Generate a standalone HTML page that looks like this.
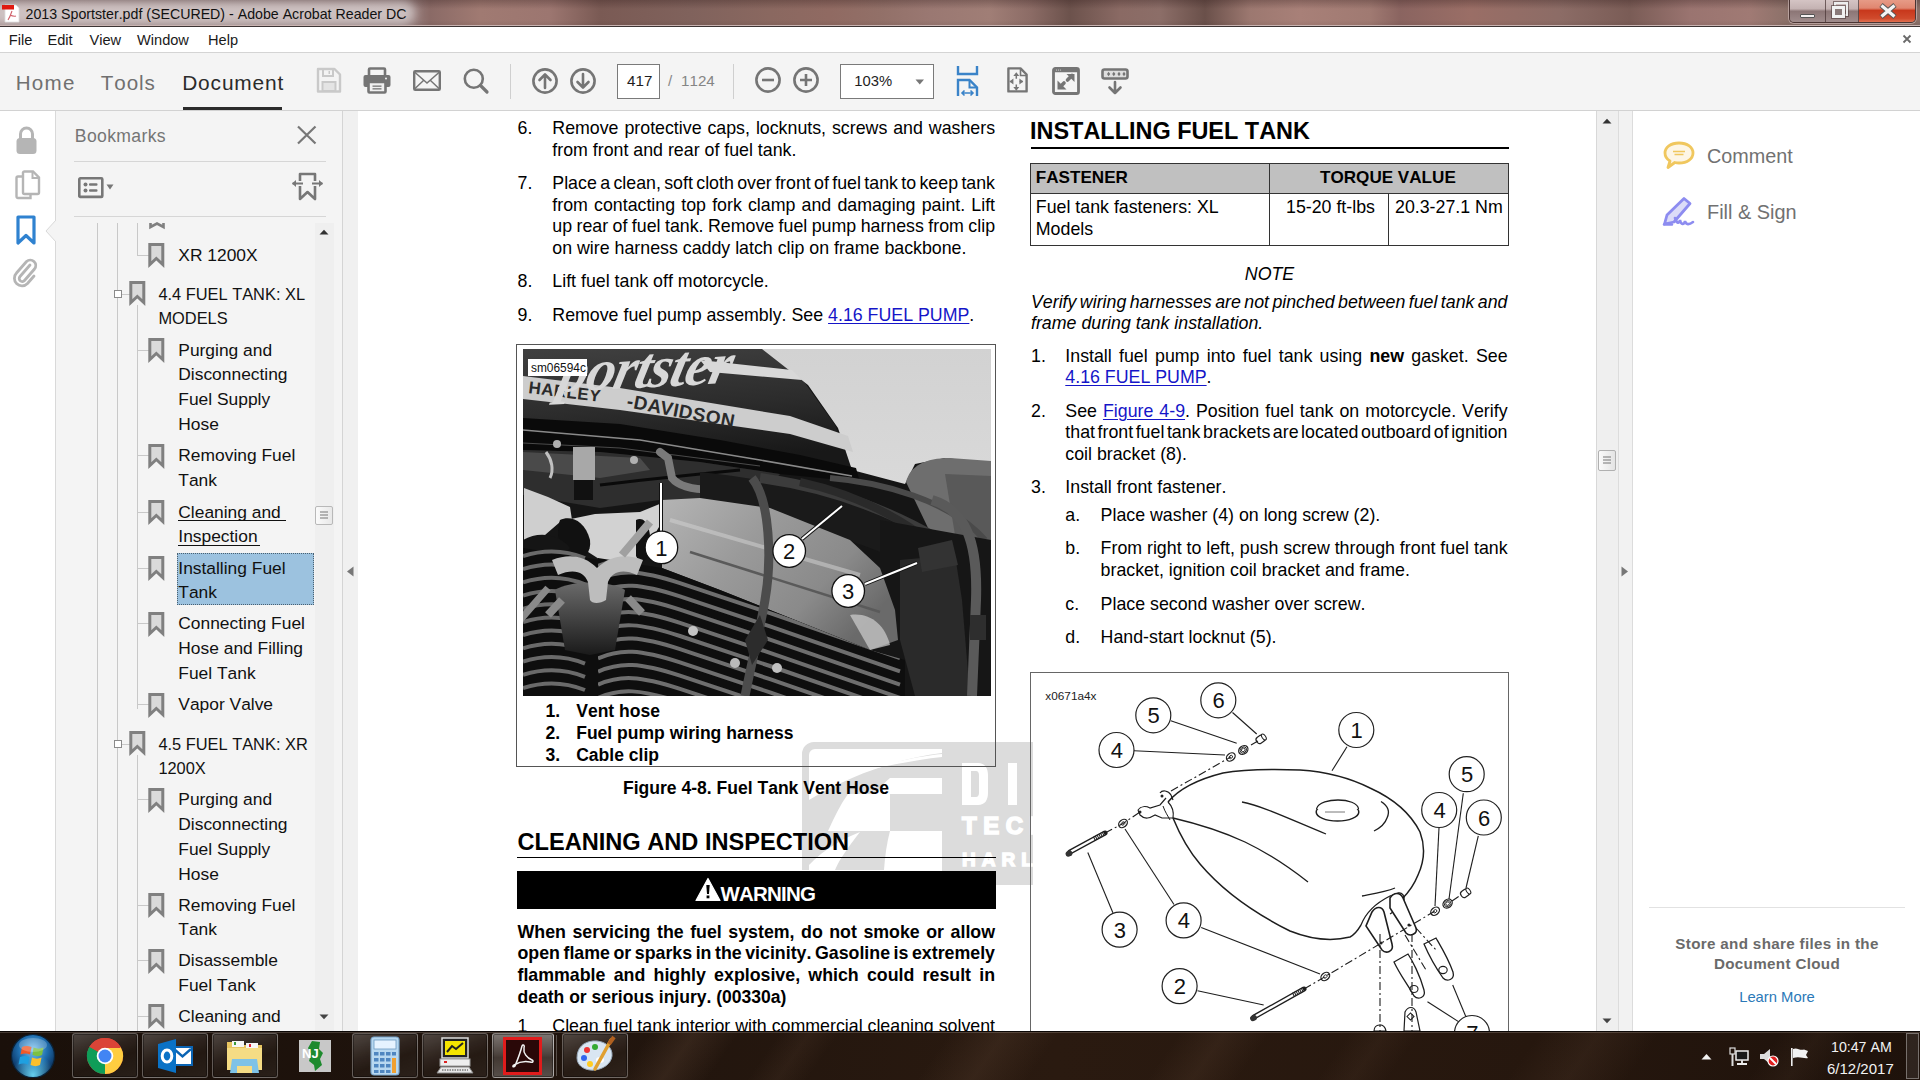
<!DOCTYPE html>
<html><head><meta charset="utf-8"><style>
html,body{margin:0;padding:0;}
body{width:1920px;height:1080px;overflow:hidden;position:relative;background:#fff;font-family:"Liberation Sans",sans-serif;color:#000;}
.t{position:absolute;white-space:nowrap;font-kerning:none;}
.r{position:absolute;}
svg{position:absolute;overflow:visible;}
</style></head><body>
<div class="r" style="left:0;top:0;width:1920px;height:27px;background:linear-gradient(90deg,#a89494 0px,#a08c8c 400px,#8a6a66 430px,#a07a72 480px,#9c7670 550px,#7a5a54 600px,#80625c 690px,#8a6860 770px,#906a62 830px,#927068 880px,#9a7872 930px,#a07e76 990px,#8c6c66 1030px,#6c524c 1070px,#8a6a64 1120px,#8c6e68 1160px,#6a504a 1205px,#9c7870 1250px,#a88078 1300px,#a07a72 1370px,#8a6460 1400px,#9a6e66 1470px,#8c6c66 1560px,#7a5c56 1630px,#9a7470 1690px,#a07a74 1750px,#8a7068 1790px,#8a7068 1920px);"></div>
<div class="r" style="left:0;top:0;width:1920px;height:27px;background:linear-gradient(180deg,rgba(40,20,20,.28) 0px,rgba(40,20,20,0) 9px,rgba(0,0,0,0) 20px,rgba(0,0,0,.05) 24px);"></div>
<div class="r" style="left:-10px;top:2px;width:425px;height:22px;background:rgba(215,205,205,.8);filter:blur(5px);border-radius:10px;"></div>
<div class="r" style="left:0px;top:25px;width:1920px;height:1px;background:#c9b4b2;"></div>
<div class="r" style="left:0px;top:26px;width:1920px;height:1px;background:#3c3434;"></div>
<svg style="left:1px;top:3px" width="19" height="20" viewBox="0 0 19 20">
<path d="M4 2 H15 L18 5 V19 H4 Z" fill="#fff" stroke="#ddd" stroke-width="0.8"/>
<rect x="1" y="2" width="12" height="4.5" fill="#e0190f"/>
<path d="M11 8 C10 11 9 14 7 17 M9 12 C11 13 13 13.5 15 13" stroke="#d0606a" stroke-width="1.1" fill="none"/>
</svg>
<div class="t" style="left:25.60px;top:7.00px;font-size:14.2px;line-height:14.2px;color:#111;">2013 Sportster.pdf (SECURED) - Adobe Acrobat Reader DC</div>
<div class="r" style="left:1789px;top:-2px;width:127px;height:25px;border:1px solid rgba(60,40,40,.8);border-top:none;border-radius:0 0 5px 5px;box-sizing:border-box;overflow:hidden;box-shadow:0 0 0 1px rgba(230,210,210,.5);">
<div class="r" style="left:0;top:0;width:35px;height:24px;background:linear-gradient(180deg,#d8c8c8 0,#c4b2b2 45%,#8c7676 55%,#a08c8c 100%);border-right:1px solid rgba(70,50,50,.7);"></div>
<div class="r" style="left:36px;top:0;width:32px;height:24px;background:linear-gradient(180deg,#d8c8c8 0,#c4b2b2 45%,#8c7676 55%,#a08c8c 100%);border-right:1px solid rgba(70,50,50,.7);"></div>
<div class="r" style="left:69px;top:0;width:58px;height:24px;background:linear-gradient(180deg,#e8a08c 0,#e08670 42%,#c8381c 52%,#d04a2c 85%,#e07050 100%);"></div>
</div>
<div class="r" style="left:1800px;top:14px;width:15px;height:4px;background:#f4f0f0;border:1px solid #555;box-sizing:border-box;border-radius:1px;"></div>
<div class="r" style="left:1834px;top:2px;width:14px;height:14px;border:2px solid #eee;box-sizing:border-box;outline:1px solid rgba(80,60,60,.6);"></div>
<div class="r" style="left:1832px;top:6px;width:13px;height:12px;border:3px solid #f2f2f2;background:#8a7a7a;box-sizing:border-box;outline:1px solid rgba(80,60,60,.6);"></div>
<svg style="left:1878px;top:3px" width="20" height="16" viewBox="0 0 20 16"><path d="M3 2 L17 14 M17 2 L3 14" stroke="#555" stroke-width="5" stroke-linecap="butt"/><path d="M3.5 2.5 L16.5 13.5 M16.5 2.5 L3.5 13.5" stroke="#f4f4f4" stroke-width="3.2"/></svg>
<div class="r" style="left:0px;top:27px;width:1920px;height:25px;background:#fff;"></div>
<div class="r" style="left:0px;top:52px;width:1920px;height:1px;background:#d4d4d4;"></div>
<div class="t" style="left:8.80px;top:33.00px;font-size:14.6px;line-height:14.6px;color:#1a1a1a;">File</div>
<div class="t" style="left:47.50px;top:33.00px;font-size:14.6px;line-height:14.6px;color:#1a1a1a;">Edit</div>
<div class="t" style="left:89.50px;top:33.00px;font-size:14.6px;line-height:14.6px;color:#1a1a1a;">View</div>
<div class="t" style="left:137.00px;top:33.00px;font-size:14.6px;line-height:14.6px;color:#1a1a1a;">Window</div>
<div class="t" style="left:208.00px;top:33.00px;font-size:14.6px;line-height:14.6px;color:#1a1a1a;">Help</div>
<svg style="left:1902px;top:34px" width="10" height="10" viewBox="0 0 10 10"><path d="M1.5 1.5 L8.5 8.5 M8.5 1.5 L1.5 8.5" stroke="#6a6a6a" stroke-width="1.8"/></svg>
<div class="r" style="left:0px;top:53px;width:1920px;height:57px;background:#f4f4f4;"></div>
<div class="r" style="left:0px;top:110px;width:1920px;height:1px;background:#d2d2d2;"></div>
<div class="t" style="left:15.80px;top:73.00px;font-size:20.6px;line-height:20.6px;color:#707070;letter-spacing:1.2px;">Home</div>
<div class="t" style="left:100.80px;top:73.00px;font-size:20.6px;line-height:20.6px;color:#707070;letter-spacing:0.9px;">Tools</div>
<div class="t" style="left:182.20px;top:73.00px;font-size:20.9px;line-height:20.9px;color:#2b2b2b;letter-spacing:0.85px;">Document</div>
<div class="r" style="left:183px;top:107px;width:99px;height:3px;background:#2b2b2b;"></div>
<svg style="left:316px;top:67px" width="27" height="27" viewBox="0 0 27 27">
<path d="M2 2 H18.5 L24 7.5 V24.5 H2 Z" fill="none" stroke="#c9c9c9" stroke-width="2.4" stroke-linejoin="round"/>
<rect x="7" y="2" width="10" height="7" fill="none" stroke="#c9c9c9" stroke-width="2"/>
<rect x="12.5" y="4" width="1.5" height="3" fill="#c9c9c9"/>
<rect x="6.5" y="15" width="13" height="9" fill="#e4e4e4" stroke="#c9c9c9" stroke-width="2"/>
</svg>
<svg style="left:363px;top:67px" width="28" height="27" viewBox="0 0 28 27">
<rect x="6" y="1.5" width="16" height="9" fill="none" stroke="#757575" stroke-width="2.6" rx="1"/>
<rect x="0.5" y="8" width="27" height="12" rx="2" fill="#757575"/>
<rect x="5.5" y="15" width="17" height="10.5" fill="#f0f0f0" stroke="#757575" stroke-width="2.6" rx="1"/>
<rect x="9.5" y="18.5" width="9" height="1.3" fill="#757575"/><rect x="9.5" y="21.2" width="9" height="1.3" fill="#757575"/>
<circle cx="23" cy="11.5" r="0.9" fill="#fff"/>
</svg>
<svg style="left:413px;top:70px" width="28" height="21" viewBox="0 0 28 21">
<rect x="1.2" y="1.2" width="25.6" height="18.6" fill="none" stroke="#757575" stroke-width="2.4" rx="1"/>
<path d="M1.5 2 L14 13 L26.5 2 M1.5 19 L10.5 10.5 M26.5 19 L17.5 10.5" fill="none" stroke="#757575" stroke-width="1.5"/>
</svg>
<svg style="left:463px;top:68px" width="26" height="26" viewBox="0 0 26 26">
<circle cx="10.8" cy="10.8" r="9" fill="none" stroke="#757575" stroke-width="2.6"/>
<path d="M17.5 17.5 L24 24" stroke="#757575" stroke-width="3.2" stroke-linecap="round"/>
</svg>
<div class="r" style="left:510px;top:64px;width:1px;height:35px;background:#cfcfcf;"></div>
<div class="r" style="left:733px;top:64px;width:1px;height:35px;background:#cfcfcf;"></div>
<svg style="left:531px;top:67px" width="28" height="28" viewBox="0 0 28 28">
<circle cx="14" cy="14" r="11.6" fill="none" stroke="#757575" stroke-width="2.6"/>
<path d="M14 21 V8 M8.5 13 L14 7.5 L19.5 13" fill="none" stroke="#757575" stroke-width="2.6" stroke-linejoin="round" stroke-linecap="round"/>
</svg>
<svg style="left:569px;top:67px" width="28" height="28" viewBox="0 0 28 28">
<circle cx="14" cy="14" r="11.6" fill="none" stroke="#757575" stroke-width="2.6"/>
<path d="M14 7 V20 M8.5 15 L14 20.5 L19.5 15" fill="none" stroke="#757575" stroke-width="2.6" stroke-linejoin="round" stroke-linecap="round"/>
</svg>
<svg style="left:754px;top:66px" width="28" height="28" viewBox="0 0 28 28">
<circle cx="14" cy="14" r="11.6" fill="none" stroke="#757575" stroke-width="2.6"/>
<path d="M8 14 H20" stroke="#757575" stroke-width="2.6"/>
</svg>
<svg style="left:792px;top:66px" width="28" height="28" viewBox="0 0 28 28">
<circle cx="14" cy="14" r="11.6" fill="none" stroke="#757575" stroke-width="2.6"/>
<path d="M8 14 H20 M14 8 V20" stroke="#757575" stroke-width="2.6"/>
</svg>
<div class="r" style="left:617px;top:64px;width:43px;height:35px;background:#fff;border:1px solid #7a7a7a;box-sizing:border-box;"></div>
<div class="t" style="left:627.00px;top:73.00px;font-size:15.2px;line-height:15.2px;color:#1e1e1e;">417</div>
<div class="t" style="left:668.00px;top:73.00px;font-size:15.2px;line-height:15.2px;color:#888;">/</div>
<div class="t" style="left:681.00px;top:73.00px;font-size:15.2px;line-height:15.2px;color:#858585;">1124</div>
<div class="r" style="left:840px;top:64px;width:94px;height:35px;background:#fff;border:1px solid #7a7a7a;box-sizing:border-box;"></div>
<div class="t" style="left:854.20px;top:74.00px;font-size:14.8px;line-height:14.8px;color:#1e1e1e;">103%</div>
<svg style="left:915px;top:79px" width="10" height="6" viewBox="0 0 10 6"><path d="M0.5 0.5 H9 L4.75 5.5 Z" fill="#777"/></svg>
<svg style="left:956px;top:65px" width="23" height="32" viewBox="0 0 23 32">
<path d="M2 1 V9 H21 V1" fill="none" stroke="#3a83c8" stroke-width="2.4"/>
<path d="M2 31 V15 H13.5 L21 22.5 V31" fill="none" stroke="#3a83c8" stroke-width="2.4" stroke-linejoin="miter"/>
<path d="M13.5 15.5 V22.5 H20.5" fill="none" stroke="#3a83c8" stroke-width="2"/>
<path d="M6 28 H17 M8.5 25.5 L6 28 L8.5 30.5 M14.5 25.5 L17 28 L14.5 30.5" fill="none" stroke="#3a83c8" stroke-width="1.6"/>
</svg>
<svg style="left:1006px;top:66px" width="23" height="28" viewBox="0 0 23 28">
<path d="M2.4 2.4 H14.5 L20.6 8.5 V25.4 H2.4 Z" fill="none" stroke="#757575" stroke-width="2.4" stroke-linejoin="round"/>
<path d="M14.5 3 V9.5 H20.5" fill="none" stroke="#757575" stroke-width="1.6"/>
<path d="M10.3 9.5 V12.8 M10.3 18.5 V21.8 M7 15.6 H3.8 M13.6 15.6 H16.8" stroke="#757575" stroke-width="1.5"/><path d="M10.3 6.2 L13.3 10 H7.3 Z M10.3 24.8 L13.3 21 H7.3 Z M3.6 15.6 L7.4 12.6 V18.6 Z M17.2 15.6 L13.4 12.6 V18.6 Z" fill="#757575"/>
</svg>
<svg style="left:1051px;top:66px" width="30" height="30" viewBox="0 0 30 30">
<rect x="2.5" y="2.5" width="25" height="25" rx="1.8" fill="none" stroke="#757575" stroke-width="2.8"/>
<rect x="2" y="2" width="26" height="4.2" fill="#757575" rx="1.5"/>
<circle cx="5.5" cy="4" r="0.6" fill="#ddd"/><circle cx="7.5" cy="4" r="0.6" fill="#ddd"/><circle cx="9.5" cy="4" r="0.6" fill="#ddd"/>
<path d="M16.5 14 L21 9.5" stroke="#757575" stroke-width="3.6" stroke-linecap="round"/><path d="M15.5 8 H23.5 V16 Z" fill="#757575"/>
<path d="M13 17 L9.5 20.5" stroke="#757575" stroke-width="3.6" stroke-linecap="round"/><path d="M6.5 14.5 V23.5 H15.5 Z" fill="#757575"/>
</svg>
<svg style="left:1100px;top:67px" width="30" height="29" viewBox="0 0 30 29">
<rect x="2.5" y="2.5" width="25" height="9" rx="2" fill="#dedede" stroke="#757575" stroke-width="2.6"/>
<path d="M7 7 L8.6 4.8 L10.2 7 L8.6 9.2 Z M12.2 7 L13.8 4.8 L15.4 7 L13.8 9.2 Z M17.4 7 L19 4.8 L20.6 7 L19 9.2 Z M22.4 7 L24 4.8 L25.6 7 L24 9.2 Z" fill="#757575"/>
<path d="M15 15 V26 M9.5 20.5 L15 26 L20.5 20.5" fill="none" stroke="#757575" stroke-width="2.6" stroke-linecap="round" stroke-linejoin="round"/>
</svg>
<div class="r" style="left:0px;top:111px;width:55px;height:920px;background:#ffffff;"></div>
<div class="r" style="left:55px;top:111px;width:1px;height:920px;background:#d9d9d9;"></div>
<svg style="left:15px;top:125px" width="23" height="30" viewBox="0 0 23 30">
<path d="M5.5 14 V9 A6 6 0 0 1 17.5 9 V14" fill="none" stroke="#b5b5b5" stroke-width="3"/>
<rect x="1.5" y="13" width="20" height="16" rx="3.5" fill="#b5b5b5"/>
</svg>
<svg style="left:15px;top:170px" width="26" height="30" viewBox="0 0 26 30">
<path d="M8 6.5 H3 A1.5 1.5 0 0 0 1.5 8 V26.5 A1.5 1.5 0 0 0 3 28 H15.5 V25" fill="none" stroke="#b5b5b5" stroke-width="2.4"/>
<path d="M8 2.5 A1.5 1.5 0 0 1 9.5 1.5 H18 L24 7.5 V22.5 A1.5 1.5 0 0 1 22.5 24 H9.5 A1.5 1.5 0 0 1 8 22.5 Z" fill="none" stroke="#b5b5b5" stroke-width="2.4"/>
<path d="M17.5 2 V8 H23.5" fill="none" stroke="#b5b5b5" stroke-width="2"/>
</svg>
<svg style="left:16px;top:215px" width="20" height="31" viewBox="0 0 20 31">
<path d="M2 2 H18 V28 L10 20.5 L2 28 Z" fill="none" stroke="#2f82d0" stroke-width="3.2" stroke-linejoin="round"/>
</svg>
<svg style="left:13px;top:258px" width="26" height="29" viewBox="0 0 26 29">
<path d="M17 7 L7 18.5 A3 3 0 0 0 11.5 22.5 L21.5 11 A5.5 5.5 0 0 0 13.5 3.5 L3.5 15 A7.5 7.5 0 0 0 14.5 25.5 L21 18" fill="none" stroke="#b5b5b5" stroke-width="2.8" stroke-linecap="round"/>
</svg>
<svg style="left:45px;top:220px" width="12" height="22" viewBox="0 0 12 22"><path d="M11 0 L1 11 L11 22" fill="#f4f4f4" stroke="#d9d9d9" stroke-width="1"/><rect x="11" y="0" width="2" height="22" fill="#f4f4f4"/></svg>
<div class="r" style="left:56px;top:111px;width:287px;height:920px;background:#f4f4f4;"></div>
<div class="r" style="left:342px;top:111px;width:1px;height:920px;background:#d4d4d4;"></div>
<div class="t" style="left:74.80px;top:128.00px;font-size:17.6px;line-height:17.6px;color:#757575;letter-spacing:0.35px;">Bookmarks</div>
<svg style="left:296px;top:125px" width="21" height="20" viewBox="0 0 21 20"><path d="M2 1.5 L19.5 18.5 M19.5 1.5 L2 18.5" stroke="#777" stroke-width="2.2"/></svg>
<div class="r" style="left:74px;top:161px;width:252px;height:1px;background:#d6d6d6;"></div>
<div class="r" style="left:74px;top:216px;width:252px;height:1px;background:#d6d6d6;"></div>
<svg style="left:78px;top:177px" width="38" height="22" viewBox="0 0 38 22">
<rect x="1.3" y="1.3" width="23" height="18.6" fill="none" stroke="#777" stroke-width="2.6" rx="1"/>
<circle cx="7.5" cy="7.5" r="2" fill="#777"/><circle cx="7.5" cy="13.5" r="2" fill="#777"/>
<rect x="11" y="6.3" width="8.5" height="2.4" fill="#777" rx="1"/><rect x="11" y="12.3" width="8.5" height="2.4" fill="#777" rx="1"/>
<path d="M28.5 7.5 H35.5 L32 12.5 Z" fill="#777"/>
</svg>
<svg style="left:291px;top:172px" width="33" height="30" viewBox="0 0 33 30">
<path d="M9 9 V2 H24 V9 M9 14 V27 L16.5 20 L24 27 V14" fill="none" stroke="#777" stroke-width="2.6" stroke-linejoin="round"/>
<path d="M1.5 11.5 H12 M21 11.5 H31.5" stroke="#777" stroke-width="2.2"/>
<path d="M1 11.5 L5 8 V15 Z M32 11.5 L28 8 V15 Z" fill="#777"/>
</svg>
<div class="r" style="left:315px;top:223px;width:19px;height:808px;background:#efefef;"></div>
<svg style="left:319px;top:229px" width="10" height="6" viewBox="0 0 10 6"><path d="M0.5 5.5 L5 0.8 L9.5 5.5 Z" fill="#333"/></svg>
<svg style="left:319px;top:1014px" width="10" height="6" viewBox="0 0 10 6"><path d="M0.5 0.5 L5 5.2 L9.5 0.5 Z" fill="#444"/></svg>
<div class="r" style="left:315px;top:506px;width:18px;height:19px;background:linear-gradient(90deg,#fafafa,#e8e8e8);border:1px solid #b8b8b8;border-radius:2px;box-sizing:border-box;"></div>
<svg style="left:319px;top:510px" width="10" height="11" viewBox="0 0 10 11"><path d="M1 2 H9 M1 5 H9 M1 8 H9" stroke="#777" stroke-width="1.2"/></svg>
<div class="r" style="left:97px;top:223px;width:1px;height:808px;background:#c8c8c8;"></div>
<div class="r" style="left:117px;top:223px;width:1px;height:808px;background:#c8c8c8;"></div>
<svg style="left:149px;top:223px" width="16" height="6" viewBox="0 0 16 6"><path d="M1.5 0 V4 L8 0.5 L14.5 4 V0" fill="none" stroke="#808080" stroke-width="2.6"/></svg>
<div class="r" style="left:137px;top:255px;width:13px;height:1px;background:#c8c8c8;"></div>
<svg style="left:148px;top:243px" width="17" height="24" viewBox="0 0 17 24"><path d="M1.8 1.5 H14.8 V21.5 L8.3 15.5 L1.8 21.5 Z" fill="#dadada" stroke="#808080" stroke-width="3" stroke-linejoin="miter"/></svg>
<div class="t" style="left:178.30px;top:247.00px;font-size:17.4px;line-height:17.4px;color:#111;">XR 1200X</div>
<div class="r" style="left:114px;top:290px;width:8px;height:8px;border:1px solid #8a8a8a;background:#fff;box-sizing:border-box;"></div>
<div class="r" style="left:122px;top:294px;width:8px;height:1px;background:#c8c8c8;"></div>
<svg style="left:128.5px;top:281px" width="17" height="24" viewBox="0 0 17 24"><path d="M1.8 1.5 H14.8 V21.5 L8.3 15.5 L1.8 21.5 Z" fill="#dadada" stroke="#808080" stroke-width="3" stroke-linejoin="miter"/></svg>
<div class="t" style="left:158.40px;top:286.00px;font-size:16.4px;line-height:16.4px;color:#111;">4.4 FUEL TANK: XL</div>
<div class="t" style="left:158.40px;top:310.00px;font-size:16.4px;line-height:16.4px;color:#111;">MODELS</div>
<div class="r" style="left:137px;top:350px;width:13px;height:1px;background:#c8c8c8;"></div>
<svg style="left:148px;top:338px" width="17" height="24" viewBox="0 0 17 24"><path d="M1.8 1.5 H14.8 V21.5 L8.3 15.5 L1.8 21.5 Z" fill="#dadada" stroke="#808080" stroke-width="3" stroke-linejoin="miter"/></svg>
<div class="t" style="left:178.30px;top:342.00px;font-size:17.4px;line-height:17.4px;color:#111;">Purging and</div>
<div class="t" style="left:178.30px;top:366.00px;font-size:17.4px;line-height:17.4px;color:#111;">Disconnecting</div>
<div class="t" style="left:178.30px;top:391.00px;font-size:17.4px;line-height:17.4px;color:#111;">Fuel Supply</div>
<div class="t" style="left:178.30px;top:416.00px;font-size:17.4px;line-height:17.4px;color:#111;">Hose</div>
<div class="r" style="left:137px;top:455px;width:13px;height:1px;background:#c8c8c8;"></div>
<svg style="left:148px;top:444px" width="17" height="24" viewBox="0 0 17 24"><path d="M1.8 1.5 H14.8 V21.5 L8.3 15.5 L1.8 21.5 Z" fill="#dadada" stroke="#808080" stroke-width="3" stroke-linejoin="miter"/></svg>
<div class="t" style="left:178.30px;top:447.00px;font-size:17.4px;line-height:17.4px;color:#111;">Removing Fuel</div>
<div class="t" style="left:178.30px;top:472.00px;font-size:17.4px;line-height:17.4px;color:#111;">Tank</div>
<div class="r" style="left:137px;top:512px;width:13px;height:1px;background:#c8c8c8;"></div>
<svg style="left:148px;top:500px" width="17" height="24" viewBox="0 0 17 24"><path d="M1.8 1.5 H14.8 V21.5 L8.3 15.5 L1.8 21.5 Z" fill="#dadada" stroke="#808080" stroke-width="3" stroke-linejoin="miter"/></svg>
<div class="t" style="left:178.30px;top:504.00px;font-size:17.4px;line-height:17.4px;color:#111;">Cleaning and</div>
<div class="t" style="left:178.30px;top:528.00px;font-size:17.4px;line-height:17.4px;color:#111;">Inspection</div>
<div class="r" style="left:178px;top:520px;width:108px;height:1px;background:#111;"></div>
<div class="r" style="left:178px;top:545px;width:82px;height:1px;background:#111;"></div>
<div class="r" style="left:137px;top:568px;width:13px;height:1px;background:#c8c8c8;"></div>
<div class="r" style="left:177px;top:553px;width:137px;height:52px;background:#9cc2df;outline:1px dotted #4a6070;outline-offset:-1px;"></div>
<svg style="left:148px;top:556px" width="17" height="24" viewBox="0 0 17 24"><path d="M1.8 1.5 H14.8 V21.5 L8.3 15.5 L1.8 21.5 Z" fill="#dadada" stroke="#808080" stroke-width="3" stroke-linejoin="miter"/></svg>
<div class="t" style="left:178.30px;top:560.00px;font-size:17.4px;line-height:17.4px;color:#111;">Installing Fuel</div>
<div class="t" style="left:178.30px;top:584.00px;font-size:17.4px;line-height:17.4px;color:#111;">Tank</div>
<div class="r" style="left:137px;top:623px;width:13px;height:1px;background:#c8c8c8;"></div>
<svg style="left:148px;top:612px" width="17" height="24" viewBox="0 0 17 24"><path d="M1.8 1.5 H14.8 V21.5 L8.3 15.5 L1.8 21.5 Z" fill="#dadada" stroke="#808080" stroke-width="3" stroke-linejoin="miter"/></svg>
<div class="t" style="left:178.30px;top:615.00px;font-size:17.4px;line-height:17.4px;color:#111;">Connecting Fuel</div>
<div class="t" style="left:178.30px;top:640.00px;font-size:17.4px;line-height:17.4px;color:#111;">Hose and Filling</div>
<div class="t" style="left:178.30px;top:665.00px;font-size:17.4px;line-height:17.4px;color:#111;">Fuel Tank</div>
<div class="r" style="left:137px;top:704px;width:13px;height:1px;background:#c8c8c8;"></div>
<svg style="left:148px;top:693px" width="17" height="24" viewBox="0 0 17 24"><path d="M1.8 1.5 H14.8 V21.5 L8.3 15.5 L1.8 21.5 Z" fill="#dadada" stroke="#808080" stroke-width="3" stroke-linejoin="miter"/></svg>
<div class="t" style="left:178.30px;top:696.00px;font-size:17.4px;line-height:17.4px;color:#111;">Vapor Valve</div>
<div class="r" style="left:114px;top:740px;width:8px;height:8px;border:1px solid #8a8a8a;background:#fff;box-sizing:border-box;"></div>
<div class="r" style="left:122px;top:744px;width:8px;height:1px;background:#c8c8c8;"></div>
<svg style="left:128.5px;top:731px" width="17" height="24" viewBox="0 0 17 24"><path d="M1.8 1.5 H14.8 V21.5 L8.3 15.5 L1.8 21.5 Z" fill="#dadada" stroke="#808080" stroke-width="3" stroke-linejoin="miter"/></svg>
<div class="t" style="left:158.40px;top:736.00px;font-size:16.4px;line-height:16.4px;color:#111;">4.5 FUEL TANK: XR</div>
<div class="t" style="left:158.40px;top:760.00px;font-size:16.4px;line-height:16.4px;color:#111;">1200X</div>
<div class="r" style="left:137px;top:799px;width:13px;height:1px;background:#c8c8c8;"></div>
<svg style="left:148px;top:788px" width="17" height="24" viewBox="0 0 17 24"><path d="M1.8 1.5 H14.8 V21.5 L8.3 15.5 L1.8 21.5 Z" fill="#dadada" stroke="#808080" stroke-width="3" stroke-linejoin="miter"/></svg>
<div class="t" style="left:178.30px;top:791.00px;font-size:17.4px;line-height:17.4px;color:#111;">Purging and</div>
<div class="t" style="left:178.30px;top:816.00px;font-size:17.4px;line-height:17.4px;color:#111;">Disconnecting</div>
<div class="t" style="left:178.30px;top:841.00px;font-size:17.4px;line-height:17.4px;color:#111;">Fuel Supply</div>
<div class="t" style="left:178.30px;top:866.00px;font-size:17.4px;line-height:17.4px;color:#111;">Hose</div>
<div class="r" style="left:137px;top:905px;width:13px;height:1px;background:#c8c8c8;"></div>
<svg style="left:148px;top:893px" width="17" height="24" viewBox="0 0 17 24"><path d="M1.8 1.5 H14.8 V21.5 L8.3 15.5 L1.8 21.5 Z" fill="#dadada" stroke="#808080" stroke-width="3" stroke-linejoin="miter"/></svg>
<div class="t" style="left:178.30px;top:897.00px;font-size:17.4px;line-height:17.4px;color:#111;">Removing Fuel</div>
<div class="t" style="left:178.30px;top:921.00px;font-size:17.4px;line-height:17.4px;color:#111;">Tank</div>
<div class="r" style="left:137px;top:960px;width:13px;height:1px;background:#c8c8c8;"></div>
<svg style="left:148px;top:949px" width="17" height="24" viewBox="0 0 17 24"><path d="M1.8 1.5 H14.8 V21.5 L8.3 15.5 L1.8 21.5 Z" fill="#dadada" stroke="#808080" stroke-width="3" stroke-linejoin="miter"/></svg>
<div class="t" style="left:178.30px;top:952.00px;font-size:17.4px;line-height:17.4px;color:#111;">Disassemble</div>
<div class="t" style="left:178.30px;top:977.00px;font-size:17.4px;line-height:17.4px;color:#111;">Fuel Tank</div>
<div class="r" style="left:137px;top:1016px;width:13px;height:1px;background:#c8c8c8;"></div>
<svg style="left:148px;top:1004px" width="17" height="24" viewBox="0 0 17 24"><path d="M1.8 1.5 H14.8 V21.5 L8.3 15.5 L1.8 21.5 Z" fill="#dadada" stroke="#808080" stroke-width="3" stroke-linejoin="miter"/></svg>
<div class="t" style="left:178.30px;top:1008.00px;font-size:17.4px;line-height:17.4px;color:#111;">Cleaning and</div>
<div class="r" style="left:137px;top:223px;width:1px;height:33px;background:#c8c8c8;"></div>
<div class="r" style="left:137px;top:305px;width:1px;height:404px;background:#c8c8c8;"></div>
<div class="r" style="left:137px;top:755px;width:1px;height:276px;background:#c8c8c8;"></div>
<div class="r" style="left:343px;top:111px;width:15px;height:920px;background:#f0f0f0;"></div>
<svg style="left:346px;top:566px" width="8" height="11" viewBox="0 0 8 11"><path d="M7.5 0.5 V10.5 L1 5.5 Z" fill="#777"/></svg>
<div class="r" style="left:358px;top:111px;width:1238px;height:920px;background:#ffffff;"></div>
<svg style="left:0;top:0" width="1920" height="1080" viewBox="0 0 1920 1080">
<path d="M814 742 H1033 V885 H942 V870 H802 V754 A12 12 0 0 1 814 742 Z" fill="#dcdcdc"/>
<path d="M815 749 H942 V753 C900 758 850 775 809 800 V755 A6 6 0 0 1 815 749 Z" fill="#fff"/>
<path d="M860 772 C890 762 920 756 942 754 V757 C915 760 885 766 860 772 Z" fill="#fff"/>
<path d="M890 778 H942 V794 H875 C880 788 885 782 890 778 Z" fill="#fff"/>
<path d="M848 794 H890 V831 H828 C834 818 840 805 848 794 Z" fill="#fff"/>
<path d="M890 831 H942 V870 H884 C885 855 887 842 890 831 Z" fill="#fff"/>
<path d="M809 865 C825 848 845 838 860 832 C850 845 840 858 835 870 H809 Z" fill="#fff"/>
<g fill="#fff" font-family="Liberation Sans" font-weight="700">
<path d="M962 763 H978 C985 763 988 768 988 775 V793 C988 800 985 805 978 805 H962 Z M971 771 V797 H976 C978 797 979 795 979 793 V775 C979 773 978 771 976 771 Z" fill-rule="evenodd"/>
<rect x="1008" y="763" width="9" height="42"/>
<text x="962" y="834" font-size="24" letter-spacing="6.5" stroke="#fff" stroke-width="1.6">TECH</text>
<text x="962" y="866" font-size="19" letter-spacing="6" stroke="#fff" stroke-width="1.4">HARL</text>
</g>
</svg>
<div class="t" style="left:517.50px;top:120.00px;font-size:17.8px;line-height:17.8px;">6.</div>
<div class="t" style="left:552.30px;top:120.00px;font-size:17.8px;line-height:17.8px;word-spacing:0.988px;">Remove protective caps, locknuts, screws and washers</div>
<div class="t" style="left:552.30px;top:142.00px;font-size:17.8px;line-height:17.8px;">from front and rear of fuel tank.</div>
<div class="t" style="left:517.50px;top:175.00px;font-size:17.8px;line-height:17.8px;">7.</div>
<div class="t" style="left:552.30px;top:175.00px;font-size:17.8px;line-height:17.8px;word-spacing:-1.573px;">Place a clean, soft cloth over front of fuel tank to keep tank</div>
<div class="t" style="left:552.30px;top:197.00px;font-size:17.8px;line-height:17.8px;word-spacing:1.229px;">from contacting top fork clamp and damaging paint. Lift</div>
<div class="t" style="left:552.30px;top:218.00px;font-size:17.8px;line-height:17.8px;word-spacing:-0.498px;">up rear of fuel tank. Remove fuel pump harness from clip</div>
<div class="t" style="left:552.30px;top:240.00px;font-size:17.8px;line-height:17.8px;">on wire harness caddy latch clip on frame backbone.</div>
<div class="t" style="left:517.50px;top:273.00px;font-size:17.8px;line-height:17.8px;">8.</div>
<div class="t" style="left:552.30px;top:273.00px;font-size:17.8px;line-height:17.8px;">Lift fuel tank off motorcycle.</div>
<div class="t" style="left:517.50px;top:307.00px;font-size:17.8px;line-height:17.8px;">9.</div>
<div class="t" style="left:552.30px;top:307.00px;font-size:17.8px;line-height:17.8px;">Remove fuel pump assembly. See <span style="color:#1515c8;text-decoration:underline;text-underline-offset:2px;">4.16 FUEL PUMP</span>.</div>
<div class="r" style="left:516px;top:344px;width:480px;height:423px;border:1px solid #555;box-sizing:border-box;"></div>
<div class="t" style="left:545.60px;top:703.00px;font-size:17.55px;line-height:17.55px;font-weight:700;">1.</div>
<div class="t" style="left:576.20px;top:703.00px;font-size:17.55px;line-height:17.55px;font-weight:700;">Vent hose</div>
<div class="t" style="left:545.60px;top:725.00px;font-size:17.55px;line-height:17.55px;font-weight:700;">2.</div>
<div class="t" style="left:576.20px;top:725.00px;font-size:17.55px;line-height:17.55px;font-weight:700;">Fuel pump wiring harness</div>
<div class="t" style="left:545.60px;top:747.00px;font-size:17.55px;line-height:17.55px;font-weight:700;">3.</div>
<div class="t" style="left:576.20px;top:747.00px;font-size:17.55px;line-height:17.55px;font-weight:700;">Cable clip</div>
<div class="t" style="left:623.00px;top:780.00px;font-size:17.55px;line-height:17.55px;font-weight:700;">Figure 4-8. Fuel Tank Vent Hose</div>
<div class="t" style="left:517.50px;top:831.00px;font-size:23.6px;line-height:23.6px;font-weight:700;">CLEANING AND INSPECTION</div>
<div class="r" style="left:517px;top:857px;width:479px;height:1px;background:#000;"></div>
<div class="r" style="left:517px;top:871px;width:479px;height:38px;background:#000;"></div>
<svg style="left:695px;top:877px" width="26" height="24" viewBox="0 0 26 24"><path d="M13 1.5 L25 23.5 H1 Z" fill="#fff" stroke="#fff" stroke-width="1.2" stroke-linejoin="round"/><path d="M11.3 8 H14.7 L14 17 H12 Z" fill="#000"/><rect x="11.6" y="18.5" width="2.8" height="2.8" fill="#000"/></svg>
<div class="t" style="left:720.50px;top:884.00px;font-size:20.5px;line-height:20.5px;font-weight:700;color:#fff;letter-spacing:-0.8px;">WARNING</div>
<div class="t" style="left:517.50px;top:924.00px;font-size:17.8px;line-height:17.8px;word-spacing:1.568px;"><span style="font-weight:700;">When servicing the fuel system, do not smoke or allow</span></div>
<div class="t" style="left:517.50px;top:945.00px;font-size:17.8px;line-height:17.8px;word-spacing:-1.408px;"><span style="font-weight:700;">open flame or sparks in the vicinity. Gasoline is extremely</span></div>
<div class="t" style="left:517.50px;top:967.00px;font-size:17.8px;line-height:17.8px;word-spacing:3.288px;"><span style="font-weight:700;">flammable and highly explosive, which could result in</span></div>
<div class="t" style="left:517.50px;top:989.00px;font-size:17.55px;line-height:17.55px;font-weight:700;">death or serious injury. (00330a)</div>
<div class="t" style="left:517.50px;top:1018.00px;font-size:17.8px;line-height:17.8px;">1</div>
<div class="t" style="left:552.30px;top:1018.00px;font-size:17.8px;line-height:17.8px;word-spacing:-0.004px;">Clean fuel tank interior with commercial cleaning solvent</div>
<div class="t" style="left:1030.00px;top:120.00px;font-size:23.45px;line-height:23.45px;font-weight:700;">INSTALLING FUEL TANK</div>
<div class="r" style="left:1031px;top:147px;width:478px;height:2px;background:#000;"></div>
<div class="r" style="left:1031px;top:164px;width:478px;height:29px;background:#c0c0c0;"></div>
<div class="r" style="left:1030px;top:163px;width:479px;height:83px;border:1px solid #333;box-sizing:border-box;"></div>
<div class="r" style="left:1031px;top:193px;width:477px;height:1px;background:#333;"></div>
<div class="r" style="left:1269px;top:164px;width:1px;height:81px;background:#333;"></div>
<div class="r" style="left:1388px;top:194px;width:1px;height:51px;background:#333;"></div>
<div class="t" style="left:1035.80px;top:169.00px;font-size:17.1px;line-height:17.1px;font-weight:700;">FASTENER</div>
<div class="t" style="left:1320.00px;top:169.00px;font-size:17.1px;line-height:17.1px;font-weight:700;">TORQUE VALUE</div>
<div class="t" style="left:1035.80px;top:199.00px;font-size:17.8px;line-height:17.8px;">Fuel tank fasteners: XL</div>
<div class="t" style="left:1035.80px;top:221.00px;font-size:17.8px;line-height:17.8px;">Models</div>
<div class="t" style="left:1286.00px;top:199.00px;font-size:17.8px;line-height:17.8px;">15-20 ft-lbs</div>
<div class="t" style="left:1395.00px;top:199.00px;font-size:17.8px;line-height:17.8px;">20.3-27.1 Nm</div>
<div class="t" style="left:1031.00px;top:266.00px;font-size:17.8px;line-height:17.8px;font-style:italic;width:477.00px;text-align:center;">NOTE</div>
<div class="t" style="left:1031.00px;top:294.00px;font-size:17.8px;line-height:17.8px;word-spacing:-1.532px;"><span style="font-style:italic;">Verify wiring harnesses are not pinched between fuel tank and</span></div>
<div class="t" style="left:1031.00px;top:315.00px;font-size:17.8px;line-height:17.8px;font-style:italic;">frame during tank installation.</div>
<div class="t" style="left:1031.00px;top:348.00px;font-size:17.8px;line-height:17.8px;">1.</div>
<div class="t" style="left:1065.30px;top:348.00px;font-size:17.8px;line-height:17.8px;word-spacing:2.355px;">Install fuel pump into fuel tank using <span style="font-weight:700;">new</span> gasket. See</div>
<div class="t" style="left:1065.30px;top:369.00px;font-size:17.8px;line-height:17.8px;"><span style="color:#1515c8;text-decoration:underline;text-underline-offset:2px;">4.16 FUEL PUMP</span>.</div>
<div class="t" style="left:1031.00px;top:403.00px;font-size:17.8px;line-height:17.8px;">2.</div>
<div class="t" style="left:1065.30px;top:403.00px;font-size:17.8px;line-height:17.8px;word-spacing:1.047px;">See <span style="color:#1515c8;text-decoration:underline;text-underline-offset:2px;">Figure 4-9</span>. Position fuel tank on motorcycle. Verify</div>
<div class="t" style="left:1065.30px;top:424.00px;font-size:17.8px;line-height:17.8px;word-spacing:-2.375px;">that front fuel tank brackets are located outboard of ignition</div>
<div class="t" style="left:1065.30px;top:446.00px;font-size:17.8px;line-height:17.8px;">coil bracket (8).</div>
<div class="t" style="left:1031.00px;top:479.00px;font-size:17.8px;line-height:17.8px;">3.</div>
<div class="t" style="left:1065.30px;top:479.00px;font-size:17.8px;line-height:17.8px;">Install front fastener.</div>
<div class="t" style="left:1065.30px;top:507.00px;font-size:17.8px;line-height:17.8px;">a.</div>
<div class="t" style="left:1100.60px;top:507.00px;font-size:17.8px;line-height:17.8px;">Place washer (4) on long screw (2).</div>
<div class="t" style="left:1065.30px;top:540.00px;font-size:17.8px;line-height:17.8px;">b.</div>
<div class="t" style="left:1100.60px;top:540.00px;font-size:17.8px;line-height:17.8px;word-spacing:-0.023px;">From right to left, push screw through front fuel tank</div>
<div class="t" style="left:1100.60px;top:562.00px;font-size:17.8px;line-height:17.8px;">bracket, ignition coil bracket and frame.</div>
<div class="t" style="left:1065.30px;top:596.00px;font-size:17.8px;line-height:17.8px;">c.</div>
<div class="t" style="left:1100.60px;top:596.00px;font-size:17.8px;line-height:17.8px;">Place second washer over screw.</div>
<div class="t" style="left:1065.30px;top:629.00px;font-size:17.8px;line-height:17.8px;">d.</div>
<div class="t" style="left:1100.60px;top:629.00px;font-size:17.8px;line-height:17.8px;">Hand-start locknut (5).</div>
<div class="r" style="left:1030px;top:672px;width:479px;height:400px;border:1px solid #666;box-sizing:border-box;"></div>
<div class="t" style="left:1045.30px;top:691.00px;font-size:11.8px;line-height:11.8px;color:#222;">x0671a4x</div>
<div class="r" style="left:1596px;top:111px;width:1px;height:920px;background:#d8d8d8;"></div>
<div class="r" style="left:1597px;top:111px;width:21px;height:920px;background:#efefef;"></div>
<div class="r" style="left:1618px;top:111px;width:1px;height:920px;background:#dcdcdc;"></div>
<div class="r" style="left:1619px;top:111px;width:13px;height:920px;background:#f2f2f2;"></div>
<div class="r" style="left:1632px;top:111px;width:1px;height:920px;background:#dcdcdc;"></div>
<svg style="left:1602px;top:118px" width="10" height="6" viewBox="0 0 10 6"><path d="M0.5 5.5 L5 0.8 L9.5 5.5 Z" fill="#333"/></svg>
<svg style="left:1602px;top:1018px" width="10" height="6" viewBox="0 0 10 6"><path d="M0.5 0.5 L5 5.2 L9.5 0.5 Z" fill="#444"/></svg>
<div class="r" style="left:1598px;top:450px;width:18px;height:21px;background:linear-gradient(90deg,#fafafa,#e4e4e4);border:1px solid #b0b0b0;border-radius:2px;box-sizing:border-box;"></div>
<svg style="left:1602px;top:455px" width="10" height="11" viewBox="0 0 10 11"><path d="M1 2 H9 M1 5 H9 M1 8 H9" stroke="#777" stroke-width="1.2"/></svg>
<svg style="left:1621px;top:566px" width="8" height="11" viewBox="0 0 8 11"><path d="M0.5 0.5 V10.5 L7 5.5 Z" fill="#777"/></svg>
<svg style="left:0;top:0" width="1920" height="1080" viewBox="0 0 1920 1080">
<defs>
<clipPath id="pc"><rect x="523" y="349" width="468" height="347"/></clipPath><clipPath id="finr"><path d="M598 558 L662 568 L720 590 L800 622 L870 650 L905 660 L905 696 H598 Z"/></clipPath>
<linearGradient id="tankg" x1="0" y1="0" x2="0.2" y2="1"><stop offset="0" stop-color="#404040"/><stop offset="0.55" stop-color="#2c2c2c"/><stop offset="1" stop-color="#181818"/></linearGradient>
<linearGradient id="rock" x1="0" y1="0" x2="1" y2="0.6"><stop offset="0" stop-color="#b4b4b4"/><stop offset="0.4" stop-color="#9a9a9a"/><stop offset="0.75" stop-color="#8a8a8a"/><stop offset="1" stop-color="#6a6a6a"/></linearGradient>
<linearGradient id="skyg" x1="0" y1="0" x2="0" y2="1"><stop offset="0" stop-color="#d2d2d2"/><stop offset="1" stop-color="#d9d9d9"/></linearGradient>
<linearGradient id="valley" x1="0" y1="0" x2="0" y2="1"><stop offset="0" stop-color="#6a6a6a"/><stop offset="1" stop-color="#1a1a1a"/></linearGradient>
</defs>
<g clip-path="url(#pc)">
<rect x="523" y="349" width="468" height="347" fill="#151515"/>
<!-- tank -->
<path d="M523 349 H765 L805 383 L835 425 L852 468 L760 458 L680 442 L600 430 L523 424 Z" fill="url(#tankg)"/>
<!-- sky -->
<path d="M762 349 H991 V463 L945 458 L915 464 L905 484 L852 470 L838 428 L808 385 Z" fill="url(#skyg)"/>
<!-- seat -->
<path d="M906 482 C910 466 925 458 950 458 L991 461 V548 L930 532 Z" fill="#6e6e6e"/>
<path d="M945 474 L991 476 V545 L955 535 Z" fill="#595959"/>
<!-- tank lettering -->
<path d="M523 376 L620 388 L790 416 L848 436 L853 452 L790 434 L620 410 L523 399 Z" fill="#cdcdcd"/>
<g font-family="Liberation Sans" font-weight="700" fill="#2a2a2a">
<text x="0" y="0" font-size="17" transform="translate(528 393) rotate(7)" letter-spacing="0.5">HARLEY</text>
<text x="0" y="0" font-size="19" transform="translate(626 407) rotate(11)" letter-spacing="0.5">-DAVIDSON</text>
</g>
<g font-family="Liberation Serif" font-weight="700" font-style="italic" fill="#d8d8d8">
<text x="0" y="0" font-size="58" transform="translate(556 392) rotate(-3) skewX(-16)" letter-spacing="-1.5">portster</text>
</g>
<path d="M700 360 L792 370 L802 380 L710 372 Z" fill="#d8d8d8"/>
<!-- tank bottom edge -->
<path d="M523 418 L620 424 L720 440 L800 455 L856 468 L860 482 L780 474 L700 462 L600 452 L523 450 Z" fill="#0a0a0a"/>
<path d="M523 430 L640 440 L760 460 L852 476" stroke="#8a8a8a" stroke-width="1.6" fill="none"/>
<path d="M523 443 L620 448 L760 466" stroke="#4a4a4a" stroke-width="1.2" fill="none"/>
<!-- under-tank area -->
<path d="M523 450 L600 452 L700 462 L780 474 L760 500 L700 505 L660 500 L600 508 L523 495 Z" fill="#2e2e2e"/><path d="M523 452 L640 458 L650 470 L600 478 L523 470 Z" fill="#4a4a4a"/>
<rect x="573" y="447" width="22" height="33" fill="#a8a8a8"/>
<rect x="574" y="480" width="19" height="20" fill="#111"/>
<circle cx="557" cy="444" r="4" fill="#b0b0b0"/><circle cx="634" cy="460" r="4" fill="#b0b0b0"/>
<path d="M546 452 C552 460 554 470 550 478" stroke="#c0c0c0" stroke-width="3" fill="none"/>
<path d="M600 485 C640 480 690 475 740 470" stroke="#0a0a0a" stroke-width="3" fill="none"/>
<!-- light background patches -->
<path d="M524 488 L548 497 L570 507 L572 520 L560 522 L545 535 L535 560 L524 565 Z" fill="#cfcfcf"/>
<path d="M566 520 L595 514 L640 512 L662 503 L678 500 L662 522 L650 542 L640 562 L610 566 L585 550 L570 540 Z" fill="#d2d2d2"/>
<path d="M560 520 C570 515 585 520 590 540 C592 555 580 562 570 558 C560 552 555 535 560 520 Z" fill="#111"/>
<path d="M636 520 C646 515 652 530 650 550 C648 562 640 565 636 556 Z" fill="#111"/>
<path d="M523 540 C540 530 560 535 570 548 L560 560 L523 565 Z" fill="#151515"/>
<!-- vent hose elbow (callout 1) -->
<path d="M660 452 L668 458 L672 478 C680 488 700 492 735 488" stroke="#7a7a7a" stroke-width="8" fill="none" stroke-linecap="round"/>
<!-- hoses and harness band -->
<path d="M700 472 C760 478 830 492 900 520 L991 560 V600 L900 560 C830 530 760 515 700 505 Z" fill="#1a1a1a"/>
<path d="M760 478 C820 486 880 505 940 540" stroke="#3c3c3c" stroke-width="10" fill="none"/>
<path d="M800 482 C860 495 920 525 960 570" stroke="#2a2a2a" stroke-width="8" fill="none"/>
<path d="M830 478 C880 482 950 500 985 540" stroke="#4a4a4a" stroke-width="6" fill="none"/>
<path d="M880 520 L991 540 V696 H880 Z" fill="#161616"/>
<path d="M900 560 L955 555 L962 600 L970 696 H915 L900 640 Z" fill="#2a2a2a"/>
<path d="M918 548 L952 540 L958 565 L922 572 Z" fill="#333"/>
<path d="M932 500 C965 510 978 540 976 600 L972 696" stroke="#5a5a5a" stroke-width="10" fill="none"/>
<rect x="970" y="615" width="16" height="25" fill="#2e2e2e"/>
<!-- rocker cover -->
<path d="M662 500 L700 498 L770 508 L850 540 L880 568 L895 610 L898 640 L870 650 L800 622 L720 590 L662 568 Z" fill="url(#rock)"/>
<path d="M670 520 L860 575" stroke="#cfcfcf" stroke-width="4" fill="none" opacity=".55"/>
<path d="M690 552 L880 612" stroke="#5a5a5a" stroke-width="2.5" fill="none"/>
<path d="M850 615 C870 612 885 625 890 645 L870 650 Z" fill="#d0d0d0" opacity=".7"/>
<!-- fins -->
<path d="M523 548 L600 560 L598 696 H523 Z" fill="#0e0e0e"/>
<g><path d="M523 556.0 C545 549.0 565 550.0 585 558.0" stroke="#6a6a6a" stroke-width="4" fill="none"/><path d="M523 569.2 C545 562.2 565 563.2 585 571.2" stroke="#6a6a6a" stroke-width="4" fill="none"/><path d="M523 582.4 C545 575.4 565 576.4 585 584.4" stroke="#6a6a6a" stroke-width="4" fill="none"/><path d="M523 595.6 C545 588.6 565 589.6 585 597.6" stroke="#6a6a6a" stroke-width="4" fill="none"/><path d="M523 608.8 C545 601.8 565 602.8 585 610.8" stroke="#6a6a6a" stroke-width="4" fill="none"/><path d="M523 622.0 C545 615.0 565 616.0 585 624.0" stroke="#6a6a6a" stroke-width="4" fill="none"/><path d="M523 635.2 C545 628.2 565 629.2 585 637.2" stroke="#6a6a6a" stroke-width="4" fill="none"/><path d="M523 648.4 C545 641.4 565 642.4 585 650.4" stroke="#6a6a6a" stroke-width="4" fill="none"/><path d="M523 661.6 C545 654.6 565 655.6 585 663.6" stroke="#6a6a6a" stroke-width="4" fill="none"/><path d="M523 674.8 C545 667.8 565 668.8 585 676.8" stroke="#6a6a6a" stroke-width="4" fill="none"/><path d="M523 688.0 C545 681.0 565 682.0 585 690.0" stroke="#6a6a6a" stroke-width="4" fill="none"/></g>
<path d="M598 558 L662 568 L720 590 L800 622 L870 650 L905 660 L905 696 H598 Z" fill="#0e0e0e"/>
<g clip-path="url(#finr)"><path d="M598 566.0 C620 556.0 640 557.0 680 570.0 L770 600.0 L900 645.0" stroke="#6e6e6e" stroke-width="4" fill="none"/><path d="M598 579.2 C620 569.2 640 570.2 680 583.2 L770 613.2 L900 658.2" stroke="#6e6e6e" stroke-width="4" fill="none"/><path d="M598 592.4 C620 582.4 640 583.4 680 596.4 L770 626.4 L900 671.4" stroke="#6e6e6e" stroke-width="4" fill="none"/><path d="M598 605.6 C620 595.6 640 596.6 680 609.6 L770 639.6 L900 684.6" stroke="#6e6e6e" stroke-width="4" fill="none"/><path d="M598 618.8 C620 608.8 640 609.8 680 622.8 L770 652.8 L900 697.8" stroke="#6e6e6e" stroke-width="4" fill="none"/><path d="M598 632.0 C620 622.0 640 623.0 680 636.0 L770 666.0 L900 711.0" stroke="#6e6e6e" stroke-width="4" fill="none"/><path d="M598 645.2 C620 635.2 640 636.2 680 649.2 L770 679.2 L900 724.2" stroke="#6e6e6e" stroke-width="4" fill="none"/><path d="M598 658.4 C620 648.4 640 649.4 680 662.4 L770 692.4 L900 737.4" stroke="#6e6e6e" stroke-width="4" fill="none"/><path d="M598 671.6 C620 661.6 640 662.6 680 675.6 L770 705.6 L900 750.6" stroke="#6e6e6e" stroke-width="4" fill="none"/><path d="M598 684.8 C620 674.8 640 675.8 680 688.8 L770 718.8 L900 763.8" stroke="#6e6e6e" stroke-width="4" fill="none"/><path d="M598 698.0 C620 688.0 640 689.0 680 702.0 L770 732.0 L900 777.0" stroke="#6e6e6e" stroke-width="4" fill="none"/></g>
<!-- valley between cylinders -->
<path d="M555 590 C570 580 610 580 625 590 L615 650 L590 655 L565 650 Z" fill="url(#valley)"/>
<!-- spark plug bracket -->
<path d="M552 560 C570 553 585 556 597 568 C610 556 625 553 643 560 L637 575 C622 568 612 572 608 582 L606 600 C600 604 592 604 590 600 L588 582 C584 572 574 568 558 575 Z" fill="#bdbdbd"/>
<path d="M520 620 L548 588" stroke="#8a8a8a" stroke-width="7"/>
<path d="M622 555 L650 522" stroke="#a0a0a0" stroke-width="8"/>
<path d="M562 600 L548 615 M628 598 L642 613" stroke="#8a8a8a" stroke-width="8"/>
<!-- spark plug wire -->
<path d="M752 478 C770 500 772 560 765 600 C760 630 752 660 745 696" stroke="#4c4c4c" stroke-width="9" fill="none"/>
<path d="M745 640 L760 615 L768 640 L752 665 Z" fill="#2c2c2c"/>
<circle cx="693" cy="631" r="5" fill="#c4c4c4"/><circle cx="735" cy="663" r="5" fill="#bbb"/><circle cx="777" cy="668" r="5" fill="#c0c0c0"/>
</g>
<rect x="528" y="359" width="59" height="17" fill="#fff"/>
<text x="531" y="372" font-family="Liberation Sans" font-size="11.9" fill="#111">sm06594c</text>
<path d="M661 483 V531" stroke="#111" stroke-width="4"/><path d="M661 483 V531" stroke="#fff" stroke-width="2"/>
<path d="M802 539 L842 506" stroke="#111" stroke-width="4"/><path d="M802 539 L842 506" stroke="#fff" stroke-width="2"/>
<path d="M865 584 L917 563" stroke="#111" stroke-width="4"/><path d="M865 584 L917 563" stroke="#fff" stroke-width="2"/>
<g fill="#fff" stroke="#111" stroke-width="1.3">
<circle cx="661.4" cy="547.4" r="16.3"/><circle cx="789.2" cy="551" r="16.3"/><circle cx="848.2" cy="591" r="16.3"/>
</g>
<g font-family="Liberation Sans" font-size="22" fill="#111" text-anchor="middle">
<text x="661.4" y="555.5">1</text><text x="789.2" y="559">2</text><text x="848.2" y="599">3</text>
</g>
</svg>
<svg style="left:0;top:0" width="1920" height="1080" viewBox="0 0 1920 1080"><defs><clipPath id="dc"><rect x="1031" y="673" width="477" height="358"/></clipPath></defs><g clip-path="url(#dc)"><path d="M1168 802 C1178 790 1195 780 1223 773 C1245 769 1270 769 1300 770 C1330 772 1352 779 1370 788 C1392 798 1410 812 1420 832 C1426 848 1424 862 1418 875 C1414 885 1408 893 1402 899" stroke="#1e1e1e" fill="none" stroke-width="1.5"/><path d="M1173 818 C1180 835 1188 850 1200 864 C1222 890 1252 912 1290 931 C1310 939 1330 942 1350 937 C1356 934 1358 930 1361 925" stroke="#1e1e1e" fill="none" stroke-width="1.5"/><path d="M1168 802 C1172 806 1174 812 1173 818 M1160 793 C1162 790 1168 790 1171 795 L1173 800 M1138 810 C1141 806 1146 806 1150 808 L1160 805 L1166 798 M1138 810 L1140 815 C1145 820 1150 818 1155 815 L1162 818 L1173 818" stroke="#1e1e1e" fill="none" stroke-width="1.2"/><path d="M1163 806 C1165 812 1168 816 1170 820" stroke="#1e1e1e" fill="none" stroke-width="1"/><circle cx="1162" cy="796" r="1.5" fill="#222"/><circle cx="1140" cy="812" r="1.5" fill="#222"/><path d="M1242 802 C1262 806 1285 817 1326 834" stroke="#1e1e1e" fill="none" stroke-width="1.3"/><path d="M1173 818 C1190 822 1215 828 1245 842 C1270 854 1290 868 1308 882" stroke="#1e1e1e" fill="none" stroke-width="1.3"/><path d="M1381 801.5 C1388 806 1390 812 1387 818 C1385 824 1380 828 1374 831" stroke="#1e1e1e" fill="none" stroke-width="1.3"/><path d="M1362 896 C1372 894 1385 892 1395 888" stroke="#1e1e1e" fill="none" stroke-width="1.3"/><ellipse cx="1337.5" cy="812" rx="21.3" ry="9" fill="#fff" stroke="#1e1e1e" stroke-width="1.5"/><path d="M1316.5 809 C1318 802 1330 800 1338 800 C1348 800 1358 803 1358.5 809" fill="#fff" stroke="#1e1e1e" stroke-width="1.3"/><path d="M1325 812 H1345" stroke="#555" stroke-width="0.8"/><path d="M1361 925 C1366 912 1378 902 1390 896 L1398 893 C1402 892 1405 896 1404 900 L1400 903 C1396 908 1394 912 1390 914" stroke="#1e1e1e" fill="none" stroke-width="1.3"/><path d="M1372 912 C1376 906 1382 906 1384 912 L1392 944 C1394 952 1386 954 1382 950 L1366 926 Z" fill="#fff" stroke="#1e1e1e" stroke-width="1.6"/><path d="M1390 898 C1394 892 1400 892 1403 898 L1416 928 C1418 934 1410 937 1406 933 L1390 908 Z" fill="#fff" stroke="#1e1e1e" stroke-width="1.6"/><circle cx="1381" cy="943" r="1.6" fill="#222"/><circle cx="1409" cy="925" r="1.6" fill="#222"/><path d="M1394 962 L1408 954 C1412 960 1420 975 1424 990 C1426 998 1418 1000 1414 996 C1408 985 1400 975 1394 962 Z" fill="#fff" stroke="#1e1e1e" stroke-width="1.3"/><ellipse cx="1414" cy="989" rx="4" ry="3.5" fill="none" stroke="#1e1e1e" stroke-width="1.1"/><path d="M1424 944 L1436 938 C1440 945 1448 958 1453 972 C1455 980 1447 982 1443 978 C1436 968 1430 958 1424 944 Z" fill="#fff" stroke="#1e1e1e" stroke-width="1.3"/><ellipse cx="1443" cy="970" rx="4.2" ry="3.6" fill="none" stroke="#1e1e1e" stroke-width="1.1"/><path d="M1405 1012 C1408 1006 1414 1006 1416 1012 L1420 1031 H1404 Z" fill="#fff" stroke="#1e1e1e" stroke-width="1.2"/><rect x="1408" y="1014" width="5" height="5" fill="none" stroke="#222" stroke-width="1" transform="rotate(45 1410.5 1016.5)"/><path d="M1374 1031 C1374 1024 1384 1022 1386 1031 Z" fill="#fff" stroke="#1e1e1e" stroke-width="1.2"/><path d="M1070 852 L1105 833" stroke="#1e1e1e" stroke-width="5" stroke-linecap="round"/><path d="M1071 851.5 L1104 833.5" stroke="#fff" stroke-width="2.4"/><path d="M1094 839 L1105 833" stroke="#1e1e1e" stroke-width="4.5" stroke-dasharray="1 1"/><ellipse cx="1069" cy="853.5" rx="3.5" ry="3" fill="#333" transform="rotate(-30 1069 853.5)"/><path d="M1254 1017 L1304 989" stroke="#1e1e1e" stroke-width="5" stroke-linecap="round"/><path d="M1255 1016.5 L1303 989.5" stroke="#fff" stroke-width="2.4"/><path d="M1293 995 L1304 989" stroke="#1e1e1e" stroke-width="4.5" stroke-dasharray="1 1"/><ellipse cx="1253.5" cy="1018" rx="3.5" ry="3" fill="#333" transform="rotate(-30 1253.5 1018)"/><ellipse cx="1123" cy="823.5" rx="4.8" ry="3.6" fill="#fff" stroke="#222" stroke-width="1.3" transform="rotate(-40 1123 823.5)"/><ellipse cx="1123" cy="823.5" rx="1.92" ry="1.4400000000000002" fill="none" stroke="#222" stroke-width="0.9" transform="rotate(-40 1123 823.5)"/><ellipse cx="1230.8" cy="757" rx="4.8" ry="3.6" fill="#fff" stroke="#222" stroke-width="1.3" transform="rotate(-40 1230.8 757)"/><ellipse cx="1230.8" cy="757" rx="1.92" ry="1.4400000000000002" fill="none" stroke="#222" stroke-width="0.9" transform="rotate(-40 1230.8 757)"/><ellipse cx="1243.3" cy="750" rx="5" ry="4" fill="#fff" stroke="#222" stroke-width="1.3" transform="rotate(-40 1243.3 750)"/><ellipse cx="1243.3" cy="750" rx="2.0" ry="1.6" fill="none" stroke="#222" stroke-width="0.9" transform="rotate(-40 1243.3 750)"/><ellipse cx="1243.3" cy="750" rx="3.5" ry="2.8" fill="none" stroke="#222" stroke-width="0.9" transform="rotate(-40 1243.3 750)"/><g transform="rotate(-35 1261 739)"><rect x="1256" y="735.5" width="9" height="7" rx="3" fill="#fff" stroke="#222" stroke-width="1.2"/><ellipse cx="1264.5" cy="739" rx="1.8" ry="3.4" fill="#fff" stroke="#222" stroke-width="1"/></g><ellipse cx="1325.3" cy="976.5" rx="4.8" ry="3.6" fill="#fff" stroke="#222" stroke-width="1.3" transform="rotate(-40 1325.3 976.5)"/><ellipse cx="1325.3" cy="976.5" rx="1.92" ry="1.4400000000000002" fill="none" stroke="#222" stroke-width="0.9" transform="rotate(-40 1325.3 976.5)"/><ellipse cx="1435.1" cy="911.2" rx="4.8" ry="3.6" fill="#fff" stroke="#222" stroke-width="1.3" transform="rotate(-40 1435.1 911.2)"/><ellipse cx="1435.1" cy="911.2" rx="1.92" ry="1.4400000000000002" fill="none" stroke="#222" stroke-width="0.9" transform="rotate(-40 1435.1 911.2)"/><ellipse cx="1447.6" cy="903.6" rx="5" ry="4" fill="#fff" stroke="#222" stroke-width="1.3" transform="rotate(-40 1447.6 903.6)"/><ellipse cx="1447.6" cy="903.6" rx="2.0" ry="1.6" fill="none" stroke="#222" stroke-width="0.9" transform="rotate(-40 1447.6 903.6)"/><ellipse cx="1447.6" cy="903.6" rx="3.5" ry="2.8" fill="none" stroke="#222" stroke-width="0.9" transform="rotate(-40 1447.6 903.6)"/><g transform="rotate(-35 1465.5 893)"><rect x="1460.5" y="889.5" width="9" height="7" rx="3" fill="#fff" stroke="#222" stroke-width="1.2"/><ellipse cx="1469.0" cy="893" rx="1.8" ry="3.4" fill="#fff" stroke="#222" stroke-width="1"/></g><path d="M1105 833 L1123 823.5 L1140 812 M1171 791 L1230.8 757 M1304 989 L1325.3 976.5 L1435 911 M1251 745 L1258 741 M1452 901 L1461 895 M1380 934 V1031 M1412 934 V1031 M1405 935 L1426 970 M1416 928 L1436 950" stroke="#1e1e1e" stroke-width="1.1" stroke-dasharray="8 3 2 3" fill="none"/><path d="M1232.5 712.5 L1256.7 734" stroke="#1e1e1e" stroke-width="1.1"/><path d="M1170.8 720.8 L1236.7 743.3" stroke="#1e1e1e" stroke-width="1.1"/><path d="M1134 750.8 L1225 755" stroke="#1e1e1e" stroke-width="1.1"/><path d="M1347 746.7 L1332 770.8" stroke="#1e1e1e" stroke-width="1.1"/><path d="M1463.3 793.3 L1449 899" stroke="#1e1e1e" stroke-width="1.1"/><path d="M1439 828 L1435 906" stroke="#1e1e1e" stroke-width="1.1"/><path d="M1478.3 835.8 L1466 888" stroke="#1e1e1e" stroke-width="1.1"/><path d="M1112.9 912.8 L1087.8 852.5" stroke="#1e1e1e" stroke-width="1.1"/><path d="M1174 904.5 L1125 829" stroke="#1e1e1e" stroke-width="1.1"/><path d="M1201.2 927.4 L1320 974" stroke="#1e1e1e" stroke-width="1.1"/><path d="M1197.5 990.8 L1263.7 1005" stroke="#1e1e1e" stroke-width="1.1"/><path d="M1427.5 1001.7 L1460 1022.6" stroke="#1e1e1e" stroke-width="1.1"/><path d="M1452.7 985 L1466 1017" stroke="#1e1e1e" stroke-width="1.1"/><circle cx="1218.3" cy="700.3" r="17.5" fill="#fff" stroke="#222" stroke-width="1.2"/><text x="1218.6" y="708.3" font-family="Liberation Sans" font-size="22" fill="#111" text-anchor="middle">6</text><circle cx="1153.3" cy="715.3" r="17.5" fill="#fff" stroke="#222" stroke-width="1.2"/><text x="1153.6" y="723.3" font-family="Liberation Sans" font-size="22" fill="#111" text-anchor="middle">5</text><circle cx="1116.5" cy="750" r="17.5" fill="#fff" stroke="#222" stroke-width="1.2"/><text x="1116.8" y="758" font-family="Liberation Sans" font-size="22" fill="#111" text-anchor="middle">4</text><circle cx="1356.3" cy="730" r="17.5" fill="#fff" stroke="#222" stroke-width="1.2"/><text x="1356.6" y="738" font-family="Liberation Sans" font-size="22" fill="#111" text-anchor="middle">1</text><circle cx="1466.7" cy="774.2" r="17.5" fill="#fff" stroke="#222" stroke-width="1.2"/><text x="1467.0" y="782.2" font-family="Liberation Sans" font-size="22" fill="#111" text-anchor="middle">5</text><circle cx="1439.2" cy="810" r="17.5" fill="#fff" stroke="#222" stroke-width="1.2"/><text x="1439.5" y="818" font-family="Liberation Sans" font-size="22" fill="#111" text-anchor="middle">4</text><circle cx="1483.8" cy="817.5" r="17.5" fill="#fff" stroke="#222" stroke-width="1.2"/><text x="1484.1" y="825.5" font-family="Liberation Sans" font-size="22" fill="#111" text-anchor="middle">6</text><circle cx="1119.6" cy="929.6" r="17.5" fill="#fff" stroke="#222" stroke-width="1.2"/><text x="1119.8999999999999" y="937.6" font-family="Liberation Sans" font-size="22" fill="#111" text-anchor="middle">3</text><circle cx="1183.6" cy="920.4" r="17.5" fill="#fff" stroke="#222" stroke-width="1.2"/><text x="1183.8999999999999" y="928.4" font-family="Liberation Sans" font-size="22" fill="#111" text-anchor="middle">4</text><circle cx="1179.6" cy="986.1" r="17.5" fill="#fff" stroke="#222" stroke-width="1.2"/><text x="1179.8999999999999" y="994.1" font-family="Liberation Sans" font-size="22" fill="#111" text-anchor="middle">2</text><circle cx="1472" cy="1033" r="17.5" fill="#fff" stroke="#222" stroke-width="1.2"/><text x="1472.3" y="1041" font-family="Liberation Sans" font-size="22" fill="#111" text-anchor="middle">7</text></g></svg>
<div class="r" style="left:1633px;top:111px;width:287px;height:920px;background:#ffffff;"></div>
<svg style="left:1662px;top:140px" width="34" height="30" viewBox="0 0 34 30">
<path d="M17 3 C25.5 3 31 7.5 31 13 C31 18.5 25.5 23 17 23 C15.5 23 14 22.8 12.8 22.5 L6 27.5 L8 21 C4.5 19 3 16 3 13 C3 7.5 8.5 3 17 3 Z" fill="#fdf6e6" stroke="#f0c75e" stroke-width="2.8" stroke-linejoin="round"/>
<path d="M11 11.5 H23 M12.5 14.5 H21.5" stroke="#f0c75e" stroke-width="1.6"/>
</svg>
<svg style="left:1661px;top:196px" width="36" height="31" viewBox="0 0 36 31">
<path d="M23 2.5 L29 7.5 L13 26 L3.5 28 L6 19 Z" fill="#dcdcf8" stroke="#8d8cf0" stroke-width="2.8" stroke-linejoin="round"/>
<path d="M3 28.5 H11 M14 22 C16 28 18 28 19 24 C20 29 23 29 24 25 C25 29 28 29 32 26" fill="none" stroke="#8d8cf0" stroke-width="2.6" stroke-linecap="round"/>
</svg>
<div class="t" style="left:1707.00px;top:147.00px;font-size:19.8px;line-height:19.8px;color:#717171;">Comment</div>
<div class="t" style="left:1707.00px;top:203.00px;font-size:19.9px;line-height:19.9px;color:#717171;">Fill &amp; Sign</div>
<div class="r" style="left:1649px;top:907px;width:256px;height:1px;background:#e2e2e2;"></div>
<div class="t" style="left:1649.00px;top:936.00px;font-size:15.2px;line-height:15.2px;font-weight:700;color:#6a6a6a;width:256.00px;text-align:center;letter-spacing:0.33px;">Store and share files in the</div>
<div class="t" style="left:1649.00px;top:956.00px;font-size:15.2px;line-height:15.2px;font-weight:700;color:#6a6a6a;width:256.00px;text-align:center;letter-spacing:0.33px;">Document Cloud</div>
<div class="t" style="left:1649.00px;top:990.00px;font-size:14.8px;line-height:14.8px;color:#2b79b8;width:256.00px;text-align:center;">Learn More</div>
<div class="r" style="left:0;top:1031px;width:1920px;height:49px;background:linear-gradient(90deg,#1a100a 0%,#20140d 30%,#2a1a10 55%,#26170e 80%,#1e120b 100%);overflow:hidden;"><div style="position:absolute;left:630px;top:-10px;width:90px;height:80px;background:linear-gradient(90deg,rgba(120,90,70,0),rgba(120,90,70,0.22),rgba(120,90,70,0));transform:skewX(-35deg);"></div><div style="position:absolute;left:760px;top:-10px;width:60px;height:80px;background:linear-gradient(90deg,rgba(120,90,70,0),rgba(120,90,70,0.12),rgba(120,90,70,0));transform:skewX(-35deg);"></div><div style="position:absolute;left:930px;top:-10px;width:110px;height:80px;background:linear-gradient(90deg,rgba(120,90,70,0),rgba(120,90,70,0.18),rgba(120,90,70,0));transform:skewX(-35deg);"></div><div style="position:absolute;left:1160px;top:-10px;width:90px;height:80px;background:linear-gradient(90deg,rgba(120,90,70,0),rgba(120,90,70,0.15),rgba(120,90,70,0));transform:skewX(-35deg);"></div><div style="position:absolute;left:1330px;top:-10px;width:70px;height:80px;background:linear-gradient(90deg,rgba(120,90,70,0),rgba(120,90,70,0.1),rgba(120,90,70,0));transform:skewX(-35deg);"></div><div style="position:absolute;left:1520px;top:-10px;width:120px;height:80px;background:linear-gradient(90deg,rgba(120,90,70,0),rgba(120,90,70,0.14),rgba(120,90,70,0));transform:skewX(-35deg);"></div><div style="position:absolute;left:1760px;top:-10px;width:80px;height:80px;background:linear-gradient(90deg,rgba(120,90,70,0),rgba(120,90,70,0.1),rgba(120,90,70,0));transform:skewX(-35deg);"></div></div>
<div class="r" style="left:0px;top:1031px;width:1920px;height:1px;background:#0c0806;"></div>
<div class="r" style="left:0px;top:1032px;width:1920px;height:1px;background:rgba(255,240,230,0.18);"></div>
<div class="r" style="left:72px;top:1033px;width:66px;height:45px;background:linear-gradient(160deg,rgba(255,255,255,.22) 0%,rgba(255,255,255,.08) 40%,rgba(255,255,255,.03) 60%,rgba(255,255,255,.06) 100%);border:1px solid rgba(255,255,255,.28);border-radius:3px;box-sizing:border-box;box-shadow:inset 0 0 0 1px rgba(0,0,0,.35);"></div>
<div class="r" style="left:142px;top:1033px;width:66px;height:45px;background:linear-gradient(160deg,rgba(255,255,255,.22) 0%,rgba(255,255,255,.08) 40%,rgba(255,255,255,.03) 60%,rgba(255,255,255,.06) 100%);border:1px solid rgba(255,255,255,.28);border-radius:3px;box-sizing:border-box;box-shadow:inset 0 0 0 1px rgba(0,0,0,.35);"></div>
<div class="r" style="left:212px;top:1033px;width:66px;height:45px;background:linear-gradient(160deg,rgba(255,255,255,.22) 0%,rgba(255,255,255,.08) 40%,rgba(255,255,255,.03) 60%,rgba(255,255,255,.06) 100%);border:1px solid rgba(255,255,255,.28);border-radius:3px;box-sizing:border-box;box-shadow:inset 0 0 0 1px rgba(0,0,0,.35);"></div>
<div class="r" style="left:352px;top:1033px;width:66px;height:45px;background:linear-gradient(160deg,rgba(255,255,255,.22) 0%,rgba(255,255,255,.08) 40%,rgba(255,255,255,.03) 60%,rgba(255,255,255,.06) 100%);border:1px solid rgba(255,255,255,.28);border-radius:3px;box-sizing:border-box;box-shadow:inset 0 0 0 1px rgba(0,0,0,.35);"></div>
<div class="r" style="left:422px;top:1033px;width:66px;height:45px;background:linear-gradient(160deg,rgba(255,255,255,.22) 0%,rgba(255,255,255,.08) 40%,rgba(255,255,255,.03) 60%,rgba(255,255,255,.06) 100%);border:1px solid rgba(255,255,255,.28);border-radius:3px;box-sizing:border-box;box-shadow:inset 0 0 0 1px rgba(0,0,0,.35);"></div>
<div class="r" style="left:562px;top:1033px;width:66px;height:45px;background:linear-gradient(160deg,rgba(255,255,255,.22) 0%,rgba(255,255,255,.08) 40%,rgba(255,255,255,.03) 60%,rgba(255,255,255,.06) 100%);border:1px solid rgba(255,255,255,.28);border-radius:3px;box-sizing:border-box;box-shadow:inset 0 0 0 1px rgba(0,0,0,.35);"></div>
<div class="r" style="left:492px;top:1033px;width:62px;height:45px;background:linear-gradient(180deg,rgba(255,255,255,.42),rgba(255,255,255,.22) 45%,rgba(255,255,255,.16) 55%,rgba(255,255,255,.25));border:1px solid rgba(255,255,255,.28);border-radius:3px;box-sizing:border-box;box-shadow:inset 0 0 0 1px rgba(0,0,0,.35);"></div>
<div class="r" style="left:553px;top:1035px;width:1px;height:41px;background:rgba(255,255,255,.35);"></div>
<div class="r" style="left:556px;top:1035px;width:1px;height:41px;background:rgba(255,255,255,.25);"></div>
<svg style="left:10px;top:1033px" width="46" height="46" viewBox="0 0 46 46">
<defs><radialGradient id="orb" cx="0.5" cy="0.35" r="0.6"><stop offset="0" stop-color="#7fc4f0"/><stop offset="0.55" stop-color="#1f6fb0"/><stop offset="1" stop-color="#0b2f5a"/></radialGradient>
<radialGradient id="orbg" cx="0.5" cy="0.95" r="0.5"><stop offset="0" stop-color="#6fe0ff" stop-opacity=".9"/><stop offset="1" stop-color="#6fe0ff" stop-opacity="0"/></radialGradient></defs>
<circle cx="23" cy="23" r="21.5" fill="url(#orb)" stroke="#0a2238" stroke-width="1.2"/>
<circle cx="23" cy="23" r="21" fill="url(#orbg)"/>
<path d="M12 14 C15 12.5 18 12.5 21.5 14 L20 21.5 C17 20 14 20 10.5 21.5 Z" fill="#f05a28"/>
<path d="M23.5 14.5 C27 16 30 16 33.5 14.5 L32 22 C29 23.5 26 23.5 22.5 22 Z" fill="#7cc142"/>
<path d="M10 24 C13.5 22.5 16.5 22.5 19.5 24 L18 31.5 C15 30 12 30 8.5 31.5 Z" fill="#1fa0e0"/>
<path d="M22 24.5 C25.5 26 28.5 26 31.5 24.5 L30 32 C27 33.5 24 33.5 20.5 32 Z" fill="#fbc02d"/>
<ellipse cx="23" cy="12" rx="14" ry="7" fill="#fff" opacity=".22"/>
</svg>
<svg style="left:86px;top:1037px" width="38" height="38" viewBox="0 0 38 38">
<circle cx="19" cy="19" r="18" fill="#db4437"/>
<path d="M19 19 L3.4 28 A18 18 0 0 0 19 37 Z" fill="#0f9d58"/>
<path d="M3.4 28 A18 18 0 0 1 3.4 10 L19 19 Z" fill="#0f9d58"/>
<path d="M19 19 L34.6 10 A18 18 0 0 1 19 37 Z" fill="#ffcd40"/>
<path d="M19 19 L3.4 10 A18 18 0 0 1 34.6 10 Z" fill="#db4437"/>
<path d="M19 11 H34.6 A18 18 0 0 0 3.4 10 Z" fill="#db4437"/>
<path d="M19 19 L11.2 32.5 A18 18 0 0 1 1 19 A18 18 0 0 1 3.4 10 Z" fill="#0f9d58"/>
<path d="M19 11 H34.6 A18 18 0 0 1 25.9 33 L19 19 Z" fill="#ffcd40"/>
<circle cx="19" cy="19" r="8.3" fill="#fff"/><circle cx="19" cy="19" r="6.5" fill="#4285f4"/>
</svg>
<svg style="left:156px;top:1038px" width="38" height="36" viewBox="0 0 38 36">
<rect x="17" y="9" width="19" height="18" fill="#fff" stroke="#0a64b4" stroke-width="2"/>
<path d="M18 11 L26.5 18.5 L35 11" fill="none" stroke="#0a64b4" stroke-width="2.4"/>
<path d="M2 6 L20 1 V35 L2 30 Z" fill="#0a72c6"/>
<ellipse cx="11" cy="18" rx="4.8" ry="6" fill="none" stroke="#fff" stroke-width="3"/>
</svg>
<svg style="left:224px;top:1036px" width="42" height="40" viewBox="0 0 42 40">
<path d="M3 6 H16 L19 9 H38 V32 H3 Z" fill="#e8c560"/>
<rect x="8" y="5" width="12" height="6" fill="#f6f6f6"/><rect x="22" y="7" width="12" height="6" fill="#f6f6f6"/>
<rect x="10" y="6" width="2" height="3" fill="#3a9a3a"/><rect x="25" y="8" width="2" height="3" fill="#d23"/>
<path d="M3 12 H38 V34 H3 Z" fill="#f5dc84"/>
<path d="M8 23 H33 L35 37 H6 Z" fill="#7ec2e6"/><path d="M13 30 H28 V37 H13 Z" fill="#f5dc84"/>
</svg>
<svg style="left:298px;top:1039px" width="34" height="34" viewBox="0 0 34 34">
<rect x="1" y="1" width="32" height="32" fill="#c8c8c8"/>
<path d="M14 2 L22 3 L21 10 L25 14 L22 20 L24 26 L17 32 L16 26 L11 22 L13 15 L10 9 Z" fill="#1e8a2e"/>
<text x="4" y="19" font-family="Liberation Sans" font-weight="700" font-size="13" fill="#fff">NJ</text>
</svg>
<svg style="left:369px;top:1036px" width="32" height="40" viewBox="0 0 32 40">
<rect x="2" y="1" width="28" height="38" rx="3" fill="#b8d8f0" stroke="#7aa6cc" stroke-width="1.2"/>
<rect x="5" y="4" width="22" height="9" fill="#e6f3ff" stroke="#6c9ac0" stroke-width="0.8"/>
<g fill="#4f86c0">
<rect x="5" y="16" width="4.5" height="3.5"/><rect x="11" y="16" width="4.5" height="3.5"/><rect x="17" y="16" width="4.5" height="3.5"/><rect x="23" y="16" width="4" height="3.5"/>
<rect x="5" y="22" width="4.5" height="3.5"/><rect x="11" y="22" width="4.5" height="3.5"/><rect x="17" y="22" width="4.5" height="3.5"/>
<rect x="5" y="28" width="4.5" height="3.5"/><rect x="11" y="28" width="4.5" height="3.5"/><rect x="17" y="28" width="4.5" height="3.5"/>
<rect x="5" y="34" width="4.5" height="3"/><rect x="11" y="34" width="4.5" height="3"/><rect x="17" y="34" width="4.5" height="3"/>
</g><rect x="23" y="22" width="4" height="15" fill="#f0a030"/>
</svg>
<svg style="left:434px;top:1037px" width="42" height="38" viewBox="0 0 42 38">
<rect x="8" y="1" width="26" height="20" fill="#222" stroke="#ddd" stroke-width="1.5"/>
<rect x="11" y="4" width="20" height="14" fill="#f5e400"/>
<path d="M13 15 L18 9 L22 12 L29 6" stroke="#222" stroke-width="2" fill="none"/>
<rect x="6" y="22" width="30" height="7" fill="#eee" stroke="#999" stroke-width="1"/>
<rect x="10" y="24" width="3" height="2" fill="#d22"/>
<path d="M3 36 L7 30 H35 L39 36 Z" fill="#e8e8e8" stroke="#888" stroke-width="1"/>
<path d="M8 33 H34" stroke="#444" stroke-width="1.2" stroke-dasharray="1.5 1"/>
</svg>
<svg style="left:503px;top:1037px" width="39" height="38" viewBox="0 0 39 38">
<rect x="1.5" y="1.5" width="36" height="35" fill="#2a0808" stroke="#e01c1c" stroke-width="3"/>
<path d="M12 29 C14 24 17 17 19 9 C20 7 22 8 21 11 C20 16 24 21 29 23 C31 24 30 26 27 25 C22 24 16 25 11 28 C9 29 10 31 12 29 Z" fill="none" stroke="#f2f2f2" stroke-width="1.5"/>
</svg>
<svg style="left:573px;top:1036px" width="44" height="40" viewBox="0 0 44 40">
<path d="M20 5 C31 4 40 11 39 20 C38 28 30 33 22 34 C14 35 4 31 4 22 C4 12 10 6 20 5 Z" fill="#d9e6f2" stroke="#9ab" stroke-width="1"/>
<circle cx="14" cy="14" r="3" fill="#e33"/><circle cx="22" cy="11" r="3" fill="#3a3"/><circle cx="11" cy="22" r="3" fill="#36e"/><circle cx="17" cy="28" r="3" fill="#fc2"/>
<ellipse cx="27" cy="24" rx="4" ry="3" fill="#fff"/>
<path d="M22 33 L38 4" stroke="#e0a030" stroke-width="3.5" stroke-linecap="round"/>
<path d="M36 8 L41 1" stroke="#b06020" stroke-width="4"/>
</svg>
<svg style="left:1701px;top:1053px" width="11" height="7" viewBox="0 0 11 7"><path d="M0.5 6.5 L5.5 1 L10.5 6.5 Z" fill="#f2f2f2"/></svg>
<svg style="left:1729px;top:1047px" width="22" height="20" viewBox="0 0 22 20">
<rect x="7" y="4" width="12" height="9" fill="#1a1a1a" stroke="#eee" stroke-width="1.5"/>
<rect x="12" y="13" width="2" height="3" fill="#ddd"/><rect x="8" y="16" width="10" height="2" fill="#eee"/>
<rect x="1" y="1" width="5" height="6" fill="none" stroke="#ddd" stroke-width="1.2"/><rect x="2.5" y="7" width="2" height="12" fill="#ddd"/>
</svg>
<svg style="left:1759px;top:1047px" width="20" height="20" viewBox="0 0 20 20">
<path d="M1 7 H5 L11 2 V17 L5 12 H1 Z" fill="#ddd"/>
<circle cx="14" cy="14" r="5" fill="#e02020" stroke="#fff" stroke-width="1.2"/><path d="M11 11 L17 17" stroke="#fff" stroke-width="1.8"/>
</svg>
<svg style="left:1790px;top:1047px" width="20" height="20" viewBox="0 0 20 20">
<rect x="1" y="1" width="1.6" height="18" fill="#eee"/>
<path d="M3 2 C7 0 10 4 14 2.5 L18 4 L16 8 L18 11 C14 12 10 9 3 11 Z" fill="#f2f2f2"/>
</svg>
<div class="t" style="left:1831.00px;top:1040.00px;font-size:14.2px;line-height:14.2px;color:#f2f2f2;">10:47 AM</div>
<div class="t" style="left:1827.00px;top:1061.00px;font-size:15.0px;line-height:15.0px;color:#f2f2f2;">6/12/2017</div>
<div class="r" style="left:1906px;top:1033px;width:13px;height:46px;border:1px solid rgba(255,255,255,.35);background:rgba(255,255,255,.08);box-sizing:border-box;"></div>
</body></html>
